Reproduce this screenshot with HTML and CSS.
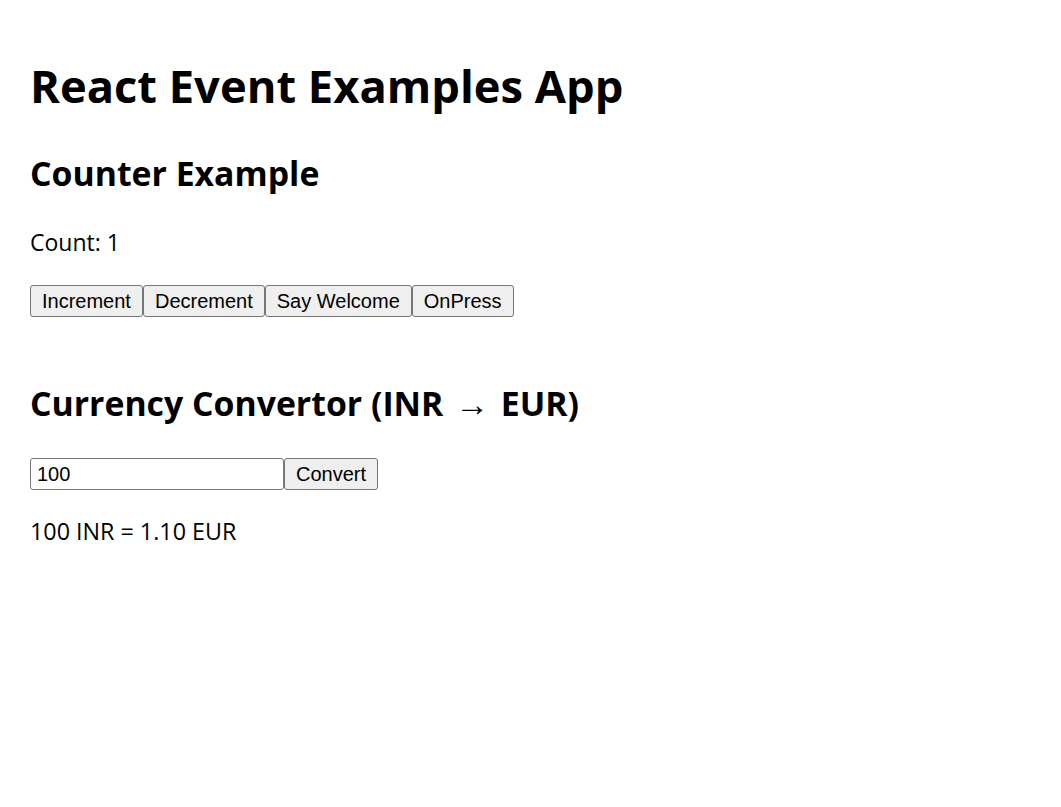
FILE: index.html
```html
<!DOCTYPE html>
<html lang="en">
<head>
<meta charset="utf-8">
<title>React Event Examples App</title>
<link rel="stylesheet" href="styles.css">
</head>
<body>
<div class="app">
  <h1 class="title">React Event Examples App</h1>
  <section class="counter">
    <h2 class="section-title">Counter Example</h2>
    <p class="count">Count: 1</p>
    <div class="buttons"><button class="btn">Increment</button><button class="btn">Decrement</button><button class="btn">Say Welcome</button><button class="btn">OnPress</button></div>
  </section>
  <section class="currency">
    <h2 class="section-title">Currency Convertor (INR <span class="arrow">&rarr;</span> EUR)</h2>
    <div class="convert-row"><input class="amount" type="text" value="100"><button class="btn">Convert</button></div>
    <p class="result">100 INR = 1.10 EUR</p>
  </section>
</div>
</body>
</html>
```

FILE: styles.css
```css
html, body {
  margin: 0;
  padding: 0;
  background: #ffffff;
}

.app {
  padding: 59px 30px 0 30px;
  font-family: "Open Sans", "Noto Sans", sans-serif;
  color: #000;
}

.title {
  margin: 0;
  font-size: 45.3px;
  line-height: 54px;
  font-weight: 700;
}

.section-title {
  margin: 0;
  font-size: 33.8px;
  line-height: 40px;
  font-weight: 700;
}

.arrow {
  display: inline-block;
  margin: 0 3px;
}

.counter .section-title {
  margin-top: 40px;
}

.count {
  margin: 35px 0 0 0;
  font-size: 23px;
  line-height: 28px;
}

.buttons {
  display: flex;
  margin-top: 29px;
}

.btn {
  height: 32px;
  margin: 0;
  padding: 0 11px;
  font-family: "Liberation Sans", Arial, sans-serif;
  font-size: 20px;
  color: #000;
  background: #efefef;
  border: 1px solid #767676;
  border-radius: 3px;
  box-sizing: border-box;
}

.currency .section-title {
  margin-top: 66px;
}

.convert-row {
  display: flex;
  margin-top: 35px;
}

.amount {
  width: 254px;
  height: 32px;
  margin: 0;
  padding: 0 6px;
  box-sizing: border-box;
  font-family: "Liberation Sans", Arial, sans-serif;
  font-size: 20px;
  color: #000;
  border: 1px solid #767676;
  border-radius: 3px;
}

.result {
  margin: 27px 0 0 0;
  font-size: 23.3px;
  line-height: 28px;
}
```
